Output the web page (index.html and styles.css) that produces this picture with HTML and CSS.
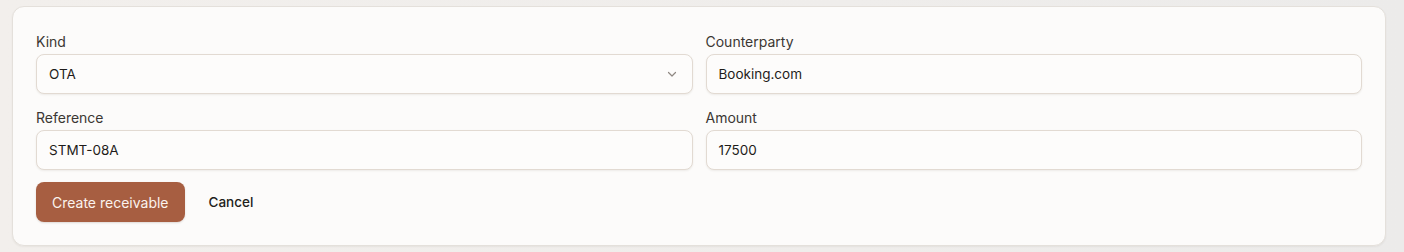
FILE: index.html
```html
<!DOCTYPE html>
<html lang="en">
<head>
<meta charset="utf-8">
<title>Create receivable</title>
<link rel="stylesheet" href="styles.css">
</head>
<body>
<form class="card">
  <div class="grid">
    <label class="field">
      <span class="label">Kind</span>
      <span class="control select">
        <span class="value">OTA</span>
        <svg class="chevron" width="12" height="12" viewBox="0 0 12 12" aria-hidden="true"><path d="M2.5 4.5 L6 8 L9.5 4.5" fill="none" stroke="#8f8882" stroke-width="1.2" stroke-linecap="round" stroke-linejoin="round"/></svg>
      </span>
    </label>
    <label class="field">
      <span class="label">Counterparty</span>
      <span class="control"><span class="value">Booking.com</span></span>
    </label>
    <label class="field">
      <span class="label">Reference</span>
      <span class="control"><span class="value">STMT-08A</span></span>
    </label>
    <label class="field">
      <span class="label">Amount</span>
      <span class="control"><span class="value">17500</span></span>
    </label>
  </div>
  <div class="actions">
    <button type="button" class="btn primary">Create receivable</button>
    <button type="button" class="btn ghost">Cancel</button>
  </div>
</form>
</body>
</html>
```
FILE: styles.css
```css
html, body {
  margin: 0;
  padding: 0;
}
body {
  background: linear-gradient(90deg, #f2efec 0%, #efedeb 60%, #ecebea 100%);
  font-family: Inter, "Noto Sans", "Liberation Sans", sans-serif;
  padding: 6px 18px 6px 12px;
  height: 252px;
  box-sizing: border-box;
}
.card {
  background: #fcfbfa;
  border: 1px solid #e4e0db;
  border-radius: 12px;
  box-shadow: 0 1px 2px rgba(60, 45, 30, 0.06);
  padding: 27px 23px 23px 23px;
  height: 240px;
  box-sizing: border-box;
}
.grid {
  display: grid;
  grid-template-columns: 1fr 1fr;
  column-gap: 13px;
  row-gap: 16px;
}
.field {
  display: flex;
  flex-direction: column;
  gap: 4px;
}
.label {
  font-size: 14px;
  line-height: 16px;
  color: #3b3733;
}
.control {
  height: 40px;
  box-sizing: border-box;
  border: 1px solid #e2dad2;
  border-radius: 8px;
  background: #fdfcfb;
  box-shadow: 0 1px 2px rgba(60, 45, 30, 0.08);
  display: flex;
  align-items: center;
  padding: 0 14px 0 12px;
  font-size: 13.5px;
  color: #1f1c1a;
}
.value {
  flex: 1;
}
.chevron {
  flex: none;
}
.actions {
  display: flex;
  align-items: center;
  gap: 8px;
  margin-top: 12px;
}
.btn {
  font-family: inherit;
  height: 40px;
  border-radius: 8px;
  padding: 0 16px;
  border: none;
  cursor: pointer;
}
.primary {
  background: #a75e41;
  color: #fbf3ee;
  font-size: 14px;
  font-weight: 400;
  box-shadow: 0 1px 2px rgba(60, 30, 15, 0.15);
}
.ghost {
  background: transparent;
  color: #221e1b;
  font-size: 13.5px;
  font-weight: 500;
}
```
